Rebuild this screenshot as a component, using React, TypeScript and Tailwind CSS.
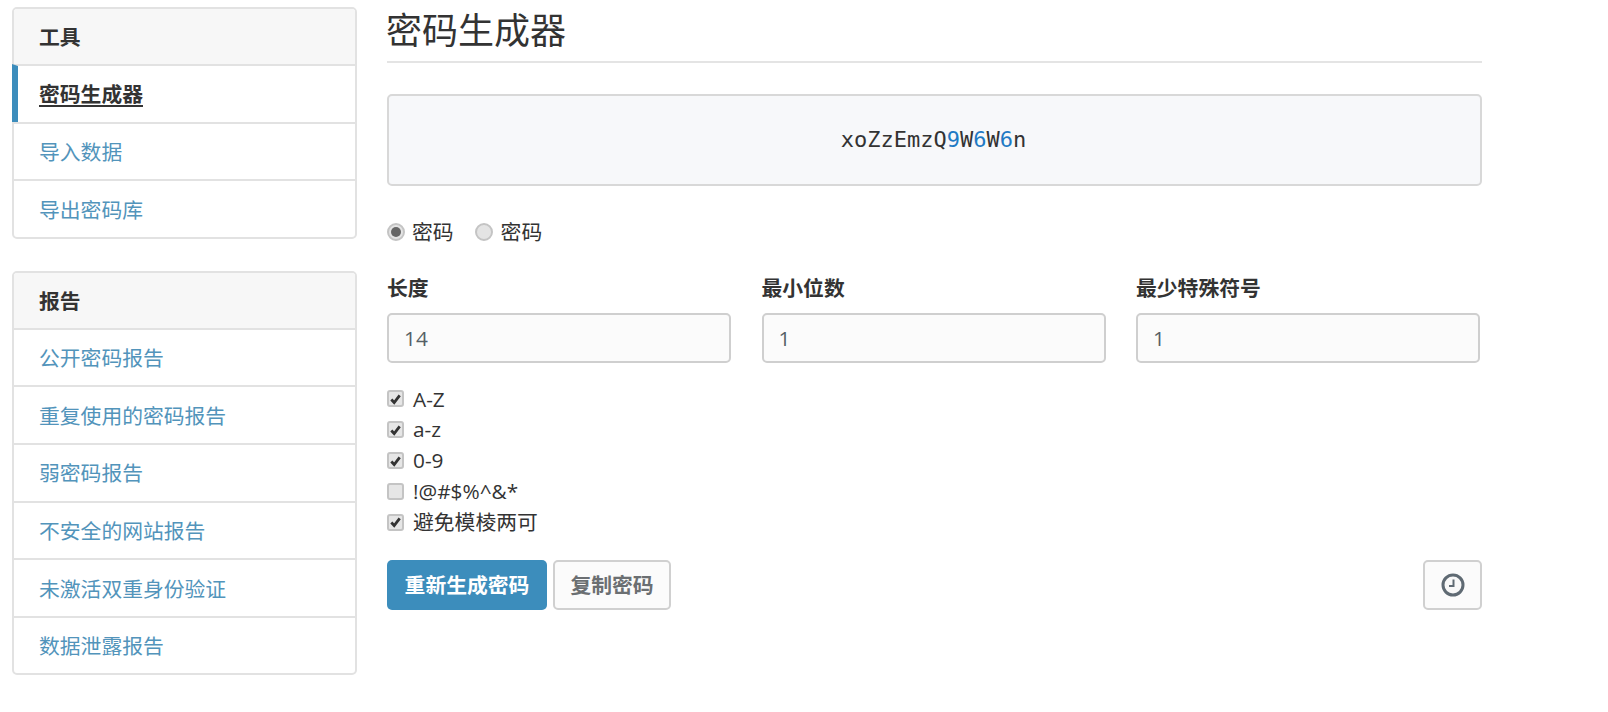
const fontStack = "font-['Open_Sans','Noto_Sans_CJK_SC',sans-serif]";

const toolLinks = ['导入数据', '导出密码库'];
const reportLinks = ['公开密码报告', '重复使用的密码报告', '弱密码报告', '不安全的网站报告', '未激活双重身份验证', '数据泄露报告'];

function Row({ children }: { children: React.ReactNode }) {
  return <div className="flex h-[57.6px] items-center border-t-2 border-[#e2e2e2] px-[25px] pt-[2px]">{children}</div>;
}

function Card({ title, children }: { title: string; children: React.ReactNode }) {
  return (
    <div className="rounded-[5px] border-2 border-[#e2e2e2] bg-white">
      <div className="flex h-[55px] items-center rounded-t-[3px] bg-[#f7f7f7] px-[25px] pt-[2px] font-bold text-[#333]">{title}</div>
      {children}
    </div>
  );
}

function Check({ checked }: { checked: boolean }) {
  return (
    <span className="flex h-[17px] w-[17px] shrink-0 items-center justify-center rounded-[3px] border-2 border-[#c4c4c4] bg-[#e6e6e6]">
      {checked && (
        <svg viewBox="0 0 14 14" className="h-[14px] w-[14px]">
          <path d="M2.5 7.5 L5.6 10.8 L11.5 3.2" fill="none" stroke="#333" strokeWidth="3" />
        </svg>
      )}
    </span>
  );
}

function Radio({ checked }: { checked: boolean }) {
  return (
    <span className="flex h-[18px] w-[18px] shrink-0 items-center justify-center rounded-full border-2 border-[#c4c4c4] bg-[#e4e4e4]">
      {checked && <span className="h-[10px] w-[10px] rounded-full bg-[#666]" />}
    </span>
  );
}

function NumberField({ label, value }: { label: string; value: string }) {
  return (
    <div className="w-[344px]">
      <div className="flex h-[30px] items-center font-bold text-[#333]">{label}</div>
      <div className="mt-[10px] flex h-[50px] items-center rounded-[5px] border-2 border-[#cfcfcf] bg-[#fbfbfb] px-[15px] text-[#555f66]">
        {value}
      </div>
    </div>
  );
}

const options = [
  { label: 'A-Z', checked: true },
  { label: 'a-z', checked: true },
  { label: '0-9', checked: true },
  { label: '!@#$%^&*', checked: false },
  { label: '避免模棱两可', checked: true },
];

export default function App() {
  return (
    <div className={`flex h-[712px] w-[1608px] gap-[30px] overflow-hidden bg-white pl-3 pt-[7px] text-[20.8px] leading-none text-[#333] ${fontStack}`}>
      <aside className="flex w-[345px] shrink-0 flex-col gap-[32px]">
        <Card title="工具">
          <div className="-ml-[2px] flex h-[57.6px] items-center border-t-2 border-l-[6px] border-t-[#e2e2e2] border-l-[#3c8dbc] pl-[21px] pt-[2px] font-bold text-[#333] underline underline-offset-[3px]">
            密码生成器
          </div>
          {toolLinks.map((link) => (
            <Row key={link}>
              <span className="text-[#5294bb]">{link}</span>
            </Row>
          ))}
        </Card>
        <Card title="报告">
          {reportLinks.map((link) => (
            <Row key={link}>
              <span className="text-[#5294bb]">{link}</span>
            </Row>
          ))}
        </Card>
      </aside>

      <main className="w-[1095px] shrink-0">
        <h1 className="flex h-[56px] items-center border-b-2 border-[#e4e4e4] pb-[7px] text-[36px] font-normal text-[#333]">
          <span className="-ml-px">密码生成器</span>
        </h1>
        <div className="mt-[31px] flex h-[92px] items-center justify-center rounded-[5px] border-2 border-[#d8d8d8] bg-[#f7f8fa] pr-[2px] font-['DejaVu_Sans_Mono',monospace] text-[22px] text-[#333]">
          <span>
            xoZzEmzQ<span className="text-[#1f7ac4]">9</span>W<span className="text-[#1f7ac4]">6</span>W
            <span className="text-[#1f7ac4]">6</span>n
          </span>
        </div>

        <div className="mt-[30px] flex h-[32px] items-center">
          <Radio checked />
          <span className="ml-[7px]">密码</span>
          <span className="ml-[21px]">
            <Radio checked={false} />
          </span>
          <span className="ml-[8px]">密码</span>
        </div>

        <div className="mt-[25px] flex gap-[30.5px]">
          <NumberField label="长度" value="14" />
          <NumberField label="最小位数" value="1" />
          <NumberField label="最少特殊符号" value="1" />
        </div>

        <div className="mt-[20.6px] flex flex-col">
          {options.map((opt) => (
            <div key={opt.label} className="flex h-[30.8px] items-center gap-[9px]">
              <Check checked={opt.checked} />
              <span>{opt.label}</span>
            </div>
          ))}
        </div>

        <div className="mt-[22.4px] flex gap-[6px]">
          <button type="button" className="h-[50px] w-[160px] rounded-[5px] bg-[#3c8dbc] font-bold text-white">
            重新生成密码
          </button>
          <button type="button" className="h-[50px] w-[118px] rounded-[5px] border-2 border-[#d0d0d0] bg-[#fbfbfb] font-bold text-[#6b6f72]">
            复制密码
          </button>
          <button type="button" className="ml-auto flex h-[50px] w-[59px] items-center justify-center rounded-[5px] border-2 border-[#d0d0d0] bg-[#fbfbfb]">
            <svg viewBox="0 0 24 24" className="h-[24px] w-[24px]">
              <circle cx="12" cy="12" r="10" fill="#f8f8f8" stroke="#5f6a73" strokeWidth="3" />
              <path d="M12.5 6.5 V13 H8" fill="none" stroke="#5f6a73" strokeWidth="2" />
            </svg>
          </button>
        </div>
      </main>
    </div>
  );
}
